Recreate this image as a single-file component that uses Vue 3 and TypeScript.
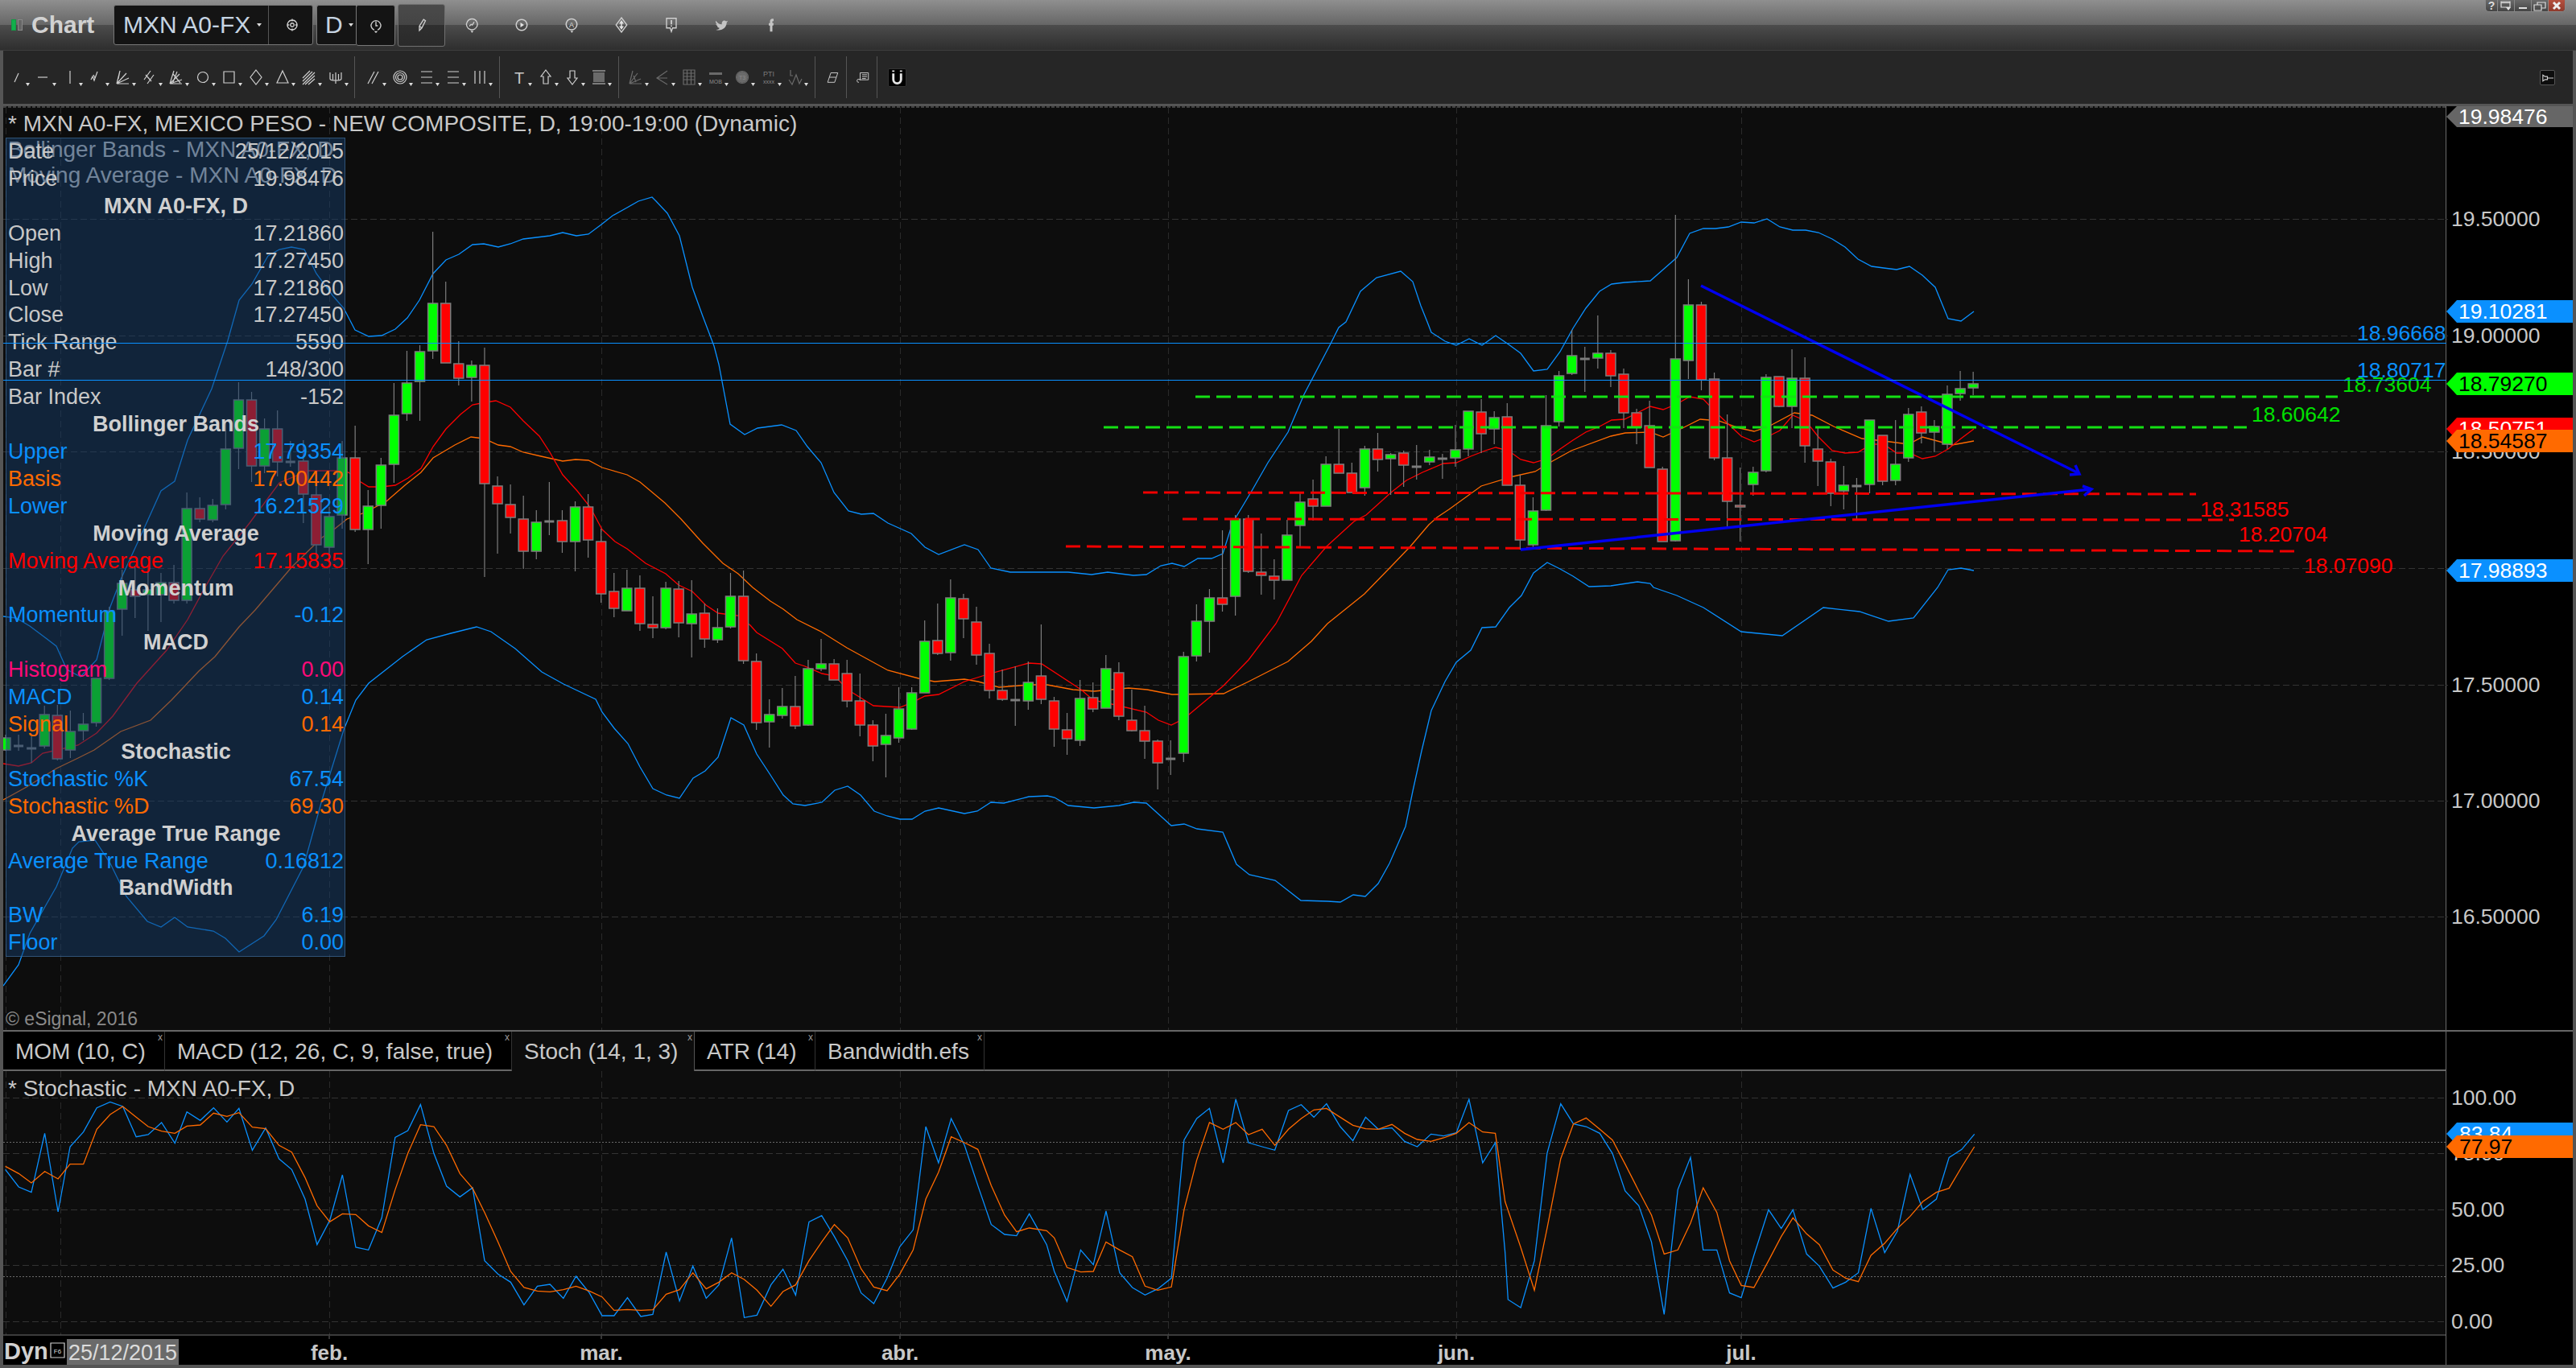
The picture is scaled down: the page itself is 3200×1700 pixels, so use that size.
<script setup lang="ts">
type Candle = [number, number, number, number, number]; // wickTop, wickBot, bodyTop, bodyBot, kind (1 up, 0 down, 2 doji)
const raw: Candle[] = [
[913,933,917,932,1],[913,933,927,927,2],[915,948,930,930,2],[877,930,888,927,1],[876,945,889,943,0],[883,942,909,932,1],[886,920,900,908,1],[843,903,843,898,1],[754,845,759,843,1],[708,790,725,757,1],[704,768,733,741,0],[704,784,733,739,1],[712,773,724,739,1],[702,750,724,746,0],[612,750,632,746,1],[618,649,632,645,0],[620,649,628,646,1],[522,633,558,627,1],[475,583,497,557,1],[487,599,497,579,0],[520,588,533,579,1],[510,592,533,574,0],[548,580,574,574,2],[547,650,573,614,0],[590,693,615,677,0],[630,700,642,680,1],[548,657,569,640,1],
[529,661,569,658,0],[609,701,629,658,1],[569,657,578,628,1],[476,600,516,577,1],[436,523,476,514,1],[429,523,437,474,1],[288,446,377,436,1],[350,451,377,451,0],[424,479,452,470,0],[448,499,454,469,1],[432,717,454,601,0],[592,688,604,626,0],[602,663,627,643,0],[616,707,645,685,0],[634,695,649,685,1],[599,665,648,648,2],[634,687,647,673,0],[623,710,630,673,1],[614,693,630,671,0],[657,749,673,738,0],
[712,767,735,756,0],[708,759,731,759,1],[715,784,731,775,0],[741,793,776,780,0],[723,782,731,780,1],[722,792,732,774,0],[721,817,763,775,1],[750,805,762,794,0],[756,799,780,795,1],[712,781,741,779,1],[709,825,741,821,0],[812,907,822,898,0],[869,929,888,897,1],[855,893,878,889,1],[840,906,878,902,0],
[820,902,831,901,1],[794,834,825,831,1],[819,845,825,845,0],[820,879,837,871,0],[837,915,871,901,0],[895,946,901,927,0],[887,966,914,925,1],[854,923,881,917,1],[854,907,861,906,1],[771,861,797,861,1],[750,814,796,812,0],[720,821,743,811,1],[738,793,744,769,0],[754,826,773,814,0],[800,868,812,858,0],[832,871,858,869,0],[828,902,870,870,2],[822,882,848,871,1],[776,875,840,869,0],[866,928,871,906,0],[886,938,907,918,0],[845,927,868,920,1],[848,885,867,881,0],[814,880,831,880,1],[823,895,836,890,0],[857,909,895,908,0],[877,943,908,921,0],[919,981,921,948,0],[920,963,943,943,2],[810,947,816,936,1],[751,822,772,815,1],[732,811,743,772,1],[659,760,743,751,0],[640,765,645,741,1],[640,712,645,710,0],[663,739,711,715,0],[695,745,716,721,0],[646,721,665,721,1],
[613,680,624,653,1],[596,647,620,629,0],[567,629,577,629,1],[533,588,577,588,0],[575,612,588,612,0],[554,616,558,606,1],[538,586,558,571,0],[563,615,565,570,1],[560,605,563,578,0],[553,596,580,580,2],[559,578,568,574,1],[564,595,570,570,2],
[528,580,559,569,1],[511,567,511,558,1],[496,563,512,539,0],[511,552,519,533,1],[501,603,518,603,0],[590,683,603,671,0],[618,682,635,677,1],[491,635,529,634,1],[461,530,467,524,1],[410,466,442,464,1],[431,487,446,446,2],[392,458,439,445,1],[435,481,439,467,0],[458,532,465,513,0],[508,552,513,531,0],[498,581,529,581,0],[580,673,583,673,0],[267,673,446,672,1],[347,471,379,448,1],[375,485,379,472,0],[463,572,471,569,0],[515,656,569,623,0],[581,673,628,630,0],[580,616,587,602,1],[465,587,469,585,1],[468,506,468,505,0],[434,532,470,505,1],[444,575,470,554,0],[530,604,558,573,0],[570,629,574,613,0],[579,633,603,610,1],[594,647,604,604,2],[522,613,522,602,1],[541,603,541,598,0],[522,603,577,597,1],[507,574,515,569,1],[505,551,512,538,0],[522,562,530,537,1],[479,558,490,552,1],[461,498,483,489,1],[462,491,477,482,1],
];
const candles = raw.map((c, i) => ({ x: 7 + 16.08 * i, wt: c[0], wb: c[1], bt: c[2], bb: c[3], k: c[4] }));

const pts = (a: number[]) => {
  const out: string[] = [];
  for (let i = 0; i < a.length; i += 2) out.push(a[i] + ',' + a[i + 1]);
  return out.join(' ');
};
const upper = pts([4,766,20,768,37,778,57,793,70,803,83,832,100,841,120,820,137,754,150,720,182,650,200,610,217,598,233,547,263,483,283,423,297,373,313,353,333,318,347,310,362,307,378,310,393,340,413,367,427,383,441,410,458,418,474,417,491,409,506,395,521,373,538,340,554,323,570,316,587,304,601,303,619,307,634,303,650,297,683,293,699,289,716,293,731,291,747,279,761,268,779,258,793,250,810,245,815,250,829,265,844,293,860,357,873,393,887,430,893,453,907,527,925,540,941,532,971,528,989,535,1003,555,1020,575,1036,612,1054,635,1070,639,1085,638,1103,650,1132,663,1149,680,1166,689,1198,677,1215,683,1231,706,1255,711,1327,711,1356,714,1376,711,1408,715,1424,714,1442,703,1456,700,1471,704,1488,694,1505,694,1519,688,1531,650,1555,610,1575,575,1600,537,1620,490,1653,427,1663,407,1672,400,1690,362,1710,345,1740,337,1755,350,1765,380,1773,400,1778,413,1795,424,1809,429,1825,421,1841,429,1858,417,1874,428,1889,439,1905,461,1922,459,1938,437,1954,408,1970,383,1987,362,2002,353,2018,351,2050,349,2066,335,2083,320,2099,290,2116,284,2131,284,2147,282,2163,276,2179,277,2195,272,2211,282,2227,286,2243,286,2259,289,2276,297,2292,307,2308,322,2325,331,2340,333,2356,335,2372,331,2388,342,2404,357,2420,396,2436,399,2452,387]);
const lower = pts([4,1225,23,1199,37,1160,70,1102,90,1054,98,1046,118,1044,137,1073,157,1114,183,1145,200,1152,217,1140,233,1152,265,1157,280,1166,297,1183,328,1163,343,1143,377,1077,400,994,427,907,442,870,458,849,500,816,530,795,560,787,592,779,610,785,640,806,673,835,700,850,740,869,748,885,763,905,780,924,795,953,811,980,828,988,844,992,861,967,876,958,892,941,908,892,924,901,940,937,957,963,973,988,985,999,1000,1001,1021,997,1037,982,1053,977,1069,988,1086,1008,1102,1014,1118,1018,1133,1018,1149,1008,1166,1004,1198,1011,1214,1008,1231,997,1247,998,1278,990,1301,989,1310,991,1327,1001,1359,1004,1390,1001,1408,997,1424,998,1455,1026,1471,1024,1487,1030,1519,1034,1536,1074,1552,1087,1584,1094,1616,1119,1649,1120,1665,1121,1681,1112,1696,1114,1712,1098,1726,1073,1746,1027,1755,983,1766,933,1778,883,1795,847,1809,823,1827,808,1841,780,1858,779,1875,755,1890,740,1905,712,1922,699,1938,707,1954,716,1974,729,2001,728,2034,723,2050,725,2054,730,2083,740,2116,755,2163,785,2214,790,2265,755,2310,760,2346,772,2377,768,2407,730,2420,708,2436,706,2452,709]);
const ma = pts([4,949,23,952,39,948,53,936,71,932,97,926,120,911,140,890,170,849,207,808,233,770,253,733,277,691,310,650,347,600,383,585,420,585,433,587,445,597,458,605,474,605,491,603,507,594,523,582,538,555,554,533,572,515,587,503,603,500,616,498,634,506,650,523,670,542,683,562,699,590,717,610,733,630,748,658,764,673,779,682,802,700,827,713,843,727,860,735,877,752,892,762,917,765,932,777,940,786,972,806,988,824,1000,828,1021,837,1037,840,1053,857,1069,867,1085,877,1118,879,1133,873,1149,865,1166,863,1198,847,1230,837,1278,824,1294,825,1343,857,1358,870,1390,877,1424,885,1439,895,1455,901,1471,893,1520,852,1551,820,1585,775,1617,715,1648,679,1682,648,1697,640,1728,612,1747,597,1767,587,1793,576,1809,575,1827,567,1845,560,1858,556,1874,560,1889,571,1905,575,1922,570,1938,558,1954,547,1970,537,1987,530,2002,522,2018,521,2034,513,2050,505,2066,509,2083,502,2099,493,2116,496,2131,512,2147,527,2163,542,2179,549,2195,543,2211,535,2227,516,2243,523,2259,543,2276,560,2292,563,2308,562,2325,552,2340,552,2356,563,2372,563,2388,570,2404,567,2420,558,2436,545,2452,533]);
const basis = pts([4,994,33,978,70,955,97,942,117,932,150,909,187,895,213,870,247,834,267,816,297,779,317,758,340,731,363,704,400,668,416,657,431,645,453,637,480,623,503,603,523,587,538,569,565,553,585,543,601,545,619,553,634,555,650,562,672,567,699,573,715,571,731,572,748,581,779,590,795,599,826,625,846,645,873,675,898,700,917,713,935,730,957,747,973,757,990,770,1020,785,1052,805,1103,833,1141,843,1161,847,1198,844,1215,847,1241,854,1278,851,1301,851,1333,857,1359,859,1402,855,1425,857,1456,863,1520,862,1551,847,1600,822,1629,797,1649,775,1695,738,1729,703,1752,679,1775,652,1785,643,1800,633,1840,604,1880,592,1907,586,1925,575,1952,560,2001,542,2019,538,2050,537,2066,543,2090,532,2112,521,2135,523,2161,532,2179,536,2197,530,2229,513,2251,516,2278,530,2313,545,2340,548,2371,552,2388,543,2425,553,2452,548]);

const z7 = (a: number[]) => a.map((v, i) => (i % 2 ? 1260 + v / 3 : v / 1.206));
const z8 = (a: number[]) => a.map((v, i) => (i % 2 ? 1260 + v / 3 : 1300 + v / 0.825));
const stochK = pts([...z7([8,580,28,645,47,665,67,445,87,738,105,495,125,440,145,350,165,328,184,345,204,458,222,450,242,405,262,482,280,365,300,397,320,350,340,403,358,352,378,508,398,425,418,540,437,580,457,690,475,860,494,770,513,600,533,870,552,880,572,760,592,460,611,435,630,338,650,520,669,642,689,682,708,648,726,920,746,970,765,1000,785,1085,805,1015,824,1008,844,1060,863,978,883,1040,902,1125,920,1125,940,1058,960,1128,978,1120,998,888,1018,1070,1038,940,1058,1060,1077,1010,1096,835,1115,1132,1134,1123,1155,1010,1173,952,1192,1048,1212,775,1231,752,1250,830,1270,920,1290,1040,1309,1080,1329,985,1348,868,1368,805,1387,420,1406,555,1425,390,1445,490,1465,640,1485,785,1505,822,1523,827,1542,745,1568,860]),
...z8([8,960,21,1072,35,880,48,935,61,735,75,965,88,1020,101,1048,114,1025,128,985,141,470,154,390,167,352,181,555,194,318,207,480,221,495,234,508,248,360,261,338,274,385,287,335,301,420,314,473,327,385,340,430,354,425,367,475,380,495,394,448,407,455,420,443,433,318,447,555,460,480,470,890,473,1065,486,1095,500,920,513,520,527,335,540,410,553,420,567,445,580,520,593,660,607,715,620,850,633,1120,647,655,660,535,673,880,687,880,700,1040,712,1058,725,900,740,730,753,800,765,730,779,895,792,940,806,1022,819,1000,832,965,845,725,859,890,872,810,885,598,898,730,912,690,925,535,938,505,951,448])]);
const stochD = pts([...z7([8,568,28,595,47,630,67,587,87,615,105,560,125,560,145,430,165,375,184,345,204,385,222,420,242,437,262,445,280,418,300,414,320,370,340,382,358,368,378,422,398,428,418,490,437,515,457,610,475,715,494,775,513,745,533,748,552,790,572,815,592,655,611,520,630,413,650,420,669,490,689,595,708,650,726,740,746,850,765,960,785,1020,805,1033,824,1036,844,1028,863,1015,883,1033,902,1055,920,1105,940,1102,960,1105,978,1103,998,1045,1018,1028,1038,965,1058,1025,1077,1000,1096,965,1115,990,1134,1030,1155,1090,1173,1035,1192,1010,1212,920,1231,850,1250,785,1270,835,1290,950,1309,1018,1329,1032,1348,970,1368,880,1387,690,1406,590,1425,458,1445,480,1465,505,1485,640,1505,750,1523,812,1542,798,1568,808]),
...z8([8,835,21,945,35,962,48,960,61,850,75,880,88,905,101,1015,114,1030,128,1018,141,730,154,545,167,405,181,430,194,405,207,450,221,430,234,490,248,430,261,390,274,358,287,352,301,385,314,415,327,428,340,430,354,412,367,445,380,468,394,475,407,462,420,445,433,405,447,440,460,445,470,700,486,870,500,1030,513,800,527,540,540,410,553,388,567,430,580,470,593,560,607,660,620,750,633,895,647,880,660,780,673,648,687,740,700,920,712,1012,725,1020,740,920,753,830,765,760,779,820,792,860,806,955,819,985,832,998,845,900,859,855,872,800,885,755,898,700,912,665,925,650,938,570,951,495])]);

const vGrid = [7, 75, 409, 747, 1118, 1451, 1809, 2163];
const hGrid = [272, 417, 561, 706, 851, 995, 1139];
const axis = [
  { y: 272, t: '19.50000' }, { y: 417, t: '19.00000' }, { y: 561, t: '18.50000' },
  { y: 706, t: '18.00000' }, { y: 851, t: '17.50000' }, { y: 995, t: '17.00000' }, { y: 1139, t: '16.50000' },
];
const tagPath = (y: number, h: number) => `M3039 ${y + h / 2}L3052 ${y}H3196V${y + h}H3052Z`;
const tags = [
  { y: 132, h: 26, t: '19.98476', fill: '#666666', ink: '#ffffff' },
  { y: 373, h: 28, t: '19.10281', fill: '#0a90ff', ink: '#ffffff' },
  { y: 463, h: 28, t: '18.79270', fill: '#00ff00', ink: '#000000' },
  { y: 519, h: 28, t: '18.50751', fill: '#ff0000', ink: '#ffffff' },
  { y: 534, h: 28, t: '18.54587', fill: '#ff6a00', ink: '#000000' },
  { y: 695, h: 28, t: '17.98893', fill: '#0a90ff', ink: '#ffffff' },
];
const levels = [
  { x: 2928, y: 414, t: '18.96668', c: 'c-blue' }, { x: 2928, y: 460, t: '18.80717', c: 'c-blue' },
  { x: 2910, y: 478, t: '18.73604', c: 'c-green' }, { x: 2797, y: 515, t: '18.60642', c: 'c-green' },
  { x: 2733, y: 633, t: '18.31585', c: 'c-red' }, { x: 2781, y: 664, t: '18.20704', c: 'c-red' },
  { x: 2862, y: 703, t: '18.07090', c: 'c-red' },
];
const dashes = [
  { d: 'M1485 493H2904', c: 'dash-green' }, { d: 'M1371 531H2791', c: 'dash-green' },
  { d: 'M1420 612L2728 614', c: 'dash-red' }, { d: 'M1469 645L2775 646', c: 'dash-red' },
  { d: 'M1324 679L2853 685', c: 'dash-red' },
];

const rows = [
  { l: 'Date', v: '25/12/2015' }, { l: 'Price', v: '19.98476' }, { h: 'MXN A0-FX, D' },
  { l: 'Open', v: '17.21860' }, { l: 'High', v: '17.27450' }, { l: 'Low', v: '17.21860' }, { l: 'Close', v: '17.27450' },
  { l: 'Tick Range', v: '5590' }, { l: 'Bar #', v: '148/300' }, { l: 'Bar Index', v: '-152' }, { h: 'Bollinger Bands' },
  { l: 'Upper', v: '17.79354', c: 'c-blue' }, { l: 'Basis', v: '17.00442', c: 'c-orange' }, { l: 'Lower', v: '16.21529', c: 'c-blue' },
  { h: 'Moving Average' }, { l: 'Moving Average', v: '17.15835', c: 'c-red' }, { h: 'Momentum' },
  { l: 'Momentum', v: '-0.12', c: 'c-blue' }, { h: 'MACD' }, { l: 'Histogram', v: '0.00', c: 'c-pink' },
  { l: 'MACD', v: '0.14', c: 'c-blue' }, { l: 'Signal', v: '0.14', c: 'c-orange' }, { h: 'Stochastic' },
  { l: 'Stochastic %K', v: '67.54', c: 'c-blue' }, { l: 'Stochastic %D', v: '69.30', c: 'c-orange' },
  { h: 'Average True Range' }, { l: 'Average True Range', v: '0.16812', c: 'c-blue' }, { h: 'BandWidth' },
  { l: 'BW', v: '6.19', c: 'c-blue' }, { l: 'Floor', v: '0.00', c: 'c-blue' },
];

const tabs = [
  { t: 'MOM (10, C)', w: 201 }, { t: 'MACD (12, 26, C, 9, false, true)', w: 431 },
  { t: 'Stoch (14, 1, 3)', w: 227, on: true }, { t: 'ATR (14)', w: 150 }, { t: 'Bandwidth.efs', w: 210 },
];

const stochGrid = [
  { y: 1364, c: 'grid-h' }, { y: 1503, c: 'grid-h' }, { y: 1572, c: 'grid-h' }, { y: 1642, c: 'grid-h' },
  { y: 1433, c: 'grid-h' }, { y: 1419, c: 'grid-dot' }, { y: 1586, c: 'grid-dot' },
];
const stochAxis = [
  { y: 1364, t: '100.00' }, { y: 1433, t: '75.00' }, { y: 1503, t: '50.00' }, { y: 1572, t: '25.00' }, { y: 1642, t: '0.00' },
];
const months = [
  { x: 409, t: 'feb.' }, { x: 747, t: 'mar.' }, { x: 1118, t: 'abr.' },
  { x: 1451, t: 'may.' }, { x: 1809, t: 'jun.' }, { x: 2163, t: 'jul.' },
];

interface Tool { d?: string; fill?: string; label?: string; sub?: string; dim?: boolean; noArrow?: boolean }
const circle = (r: number) => `M${12 - r} 12a${r} ${r} 0 1 0 ${2 * r} 0a${r} ${r} 0 1 0 ${-2 * r} 0`;
const toolGroups: { cls: string; items: Tool[] }[] = [
  { cls: 'g1', items: [
    { d: 'M9 18L14 7' }, { d: 'M5 12H17' }, { d: 'M12 4V20' },
    { d: 'M5 15L7 11L9 16L13 5M8 9L10 13' },
    { d: 'M4 20L8 4M4 20L16 7M4 20L19 13M4 20H19M8 4L6 14' },
    { d: 'M5 15L13 4M9 20L17 9M7 9L14 17' },
    { d: 'M4 20L9 4M4 20L16 8M4 20L19 15M4 20H19M8 8L17 19M13 5L8 18' },
    { d: circle(6.5) }, { d: 'M5 5H18V19H5Z' }, { d: 'M12 3L19 12L12 21L5 12Z' }, { d: 'M12 4L19 19H5Z' },
    { d: 'M4 13L13 4M4 17L16 5M4 21L19 6M7 21L19 10M11 21L19 14' },
    { d: 'M5 6V14M12 6V20M19 6V14M5 14Q5 16 12 16Q19 16 19 14M8.5 8V15M15.5 8V15' },
  ] },
  { cls: 'g2', items: [
    { d: 'M5 20L13 5M10 20L18 5' },
    { d: circle(8) + circle(5.5) + circle(3) },
    { d: 'M5 5H19M5 12H19M5 19H19' }, { d: 'M5 5H19M5 12H19M5 19H19' }, { d: 'M6 4V20M12 4V20M18 4V20' },
  ] },
  { cls: 'g3', items: [
    { label: 'T' },
    { d: 'M12 3L18 11H15V20H9V11H6Z' }, { d: 'M12 21L18 13H15V4H9V13H6Z' },
    { d: 'M4 4H20M4 20H20', fill: 'M5 6H19V18H5Z' },
  ] },
  { cls: 'g4', items: [
    { d: 'M4 20L8 4M4 20L14 7M4 20L18 14M4 20H19M9 10L12 18', dim: true },
    { d: 'M18 4L5 13L18 21M5 13L18 13', dim: true },
    { d: 'M5 3H19V21H5ZM5 7H19M5 11H19M5 15H19M9.5 3V21M14.5 3V21', dim: true },
    { fill: 'M4 6H20V9H4Z', sub: 'MOB', dim: true },
    { d: circle(7.5), fill: circle(7), sub: '', label: 'T3', dim: true },
    { label: 'PTI', sub: 'xxxx', dim: true },
    { d: 'M4 15L8 21L13 9L17 20L20 14M6 3V10H9', dim: true },
  ] },
  { cls: 'g5', items: [{ d: 'M9 5H20L15 20H4ZM6.5 12H17.5', noArrow: true }] },
  { cls: 'g6', items: [{ d: 'M7 5H20V16H7ZM10 8H18M10 11H18M10 14H16M7 17A2.5 2.5 0 1 0 5 20', noArrow: true }] },
];
</script>

<template>
  <div class="window">
    <header class="titlebar">
      <span class="led led-on"></span><span class="led"></span>
      <span class="app">Chart</span>
      <div class="symbol">
        <span class="sym-text">MXN A0-FX</span><i class="tri"></i>
        <span class="sym-cfg">
          <svg width="18" height="18" viewBox="0 0 24 24"><path class="ic" d="M12 4a8 8 0 1 0 .01 0M12 9a3 3 0 1 0 .01 0M12 2V6M12 18V22M4 12H7M17 12H20" /></svg>
        </span>
      </div>
      <div class="interval"><span class="sym-text">D</span><i class="tri"></i></div>
      <div class="clockbox">
        <svg width="18" height="20" viewBox="0 0 24 26"><path class="ic" d="M9 20A8 8 0 1 1 15 20M12 6V13H15" /><path class="white" d="M9 22H15L12 25Z" /></svg>
      </div>
      <div class="pencil">
        <svg width="18" height="20" viewBox="0 0 24 26"><path class="ic" d="M8 22L8 15L15 4L18 6L12 18ZM8 15L12 18" /></svg>
      </div>
      <div class="ticons">
        <svg width="18" height="20" viewBox="0 0 24 26"><path class="ic" d="M12 3a9 9 0 1 0 6 16M8 15L11 12L13 13L16 8" /><path class="ic" d="M18 19a9 9 0 0 0 -6 -16" /><path class="white" d="M10 23H15L12.500 26Z" /></svg>
        <svg width="18" height="20" viewBox="0 0 24 26"><path class="ic" d="M12 4a9 9 0 1 0 .01 0" /><path class="white" d="M10 9L16 13L10 17Z" /></svg>
        <svg width="18" height="20" viewBox="0 0 24 26"><path class="ic" d="M12 3a9 9 0 1 0 .01 0" /><text class="glyph" x="12" y="17" text-anchor="middle">A</text><path class="white" d="M10 23H15L12.500 26Z" /></svg>
        <svg width="18" height="20" viewBox="0 0 24 26"><path class="ic" d="M12 1L21 13L12 25L3 13Z" /><path class="white" d="M12 5L16 11H13V13H11V11H8ZM12 21L16 15H13V13H11V15H8Z" /></svg>
        <svg width="18" height="20" viewBox="0 0 24 26"><path class="ic" d="M4 2H20V18H14L12 24L10 18H4Z" /><path class="white" d="M11 5H13V12H11ZM11 13.500H13V15.500H11Z" /></svg>
        <svg width="18" height="20" viewBox="0 0 24 26"><path class="soft" d="M3 6C6 10 9 12 13 12C12 7 17 4 20 7L23 6L21 9C21 17 13 24 3 21C7 21 9 19 9 18C5 17 5 15 6 15C4 14 3 12 3 11C4 12 5 12 5 12C3 10 2 8 3 6Z" /></svg>
        <svg width="18" height="20" viewBox="0 0 24 26"><path class="soft" d="M10 24V14H8V10H10V7C10 4 12 2 16 3V7C14 6.500 14 7 14 8V10H16L15.500 14H14V24Z" /></svg>
      </div>
      <div class="winbtns">
        <span class="wb"><span class="q">?</span></span>
        <span class="wb"><svg width="20" height="15" viewBox="0 0 20 15"><path class="wi" d="M4 2H15V9H4ZM4 3.500H15" /><path class="white" d="M10 9H16L13 13Z" /></svg></span>
        <span class="wb"><svg width="20" height="15" viewBox="0 0 20 15"><path class="wi2" d="M5 10H15" /></svg></span>
        <span class="wb"><svg width="20" height="15" viewBox="0 0 20 15"><path class="wi" d="M3 6H12V13H3ZM7 6V3H17V10H12" /></svg></span>
        <span class="wb wb-x"><svg width="20" height="15" viewBox="0 0 20 15"><path class="wi3" d="M6 3L14 11M14 3L6 11" /></svg></span>
      </div>
    </header>

    <div class="framed">
      <nav class="toolbar">
        <div v-for="(g, gi) in toolGroups" :key="gi" class="tgroup" :class="g.cls">
          <svg v-for="(it, ii) in g.items" :key="ii" class="tool" :class="{ dim: it.dim }" width="33" height="28" viewBox="0 0 33 28">
            <g transform="translate(0 2)">
              <path v-if="it.fill" class="tfill" :d="it.fill" />
              <path v-if="it.d" class="tline" :d="it.d" />
              <text v-if="it.label === 'T'" class="tg-big" x="12" y="20" text-anchor="middle">T</text>
              <text v-else-if="it.label === 'T3'" class="tg-s" x="12" y="15" text-anchor="middle">T3</text>
              <text v-else-if="it.label" class="tg-m" x="12" y="11" text-anchor="middle">{{ it.label }}</text>
              <text v-if="it.sub" class="tg-s" x="12" y="20" text-anchor="middle">{{ it.sub }}</text>
            </g>
            <path v-if="!it.noArrow" class="tarrow" d="M23 21H28L25.500 25Z" />
          </svg>
        </div>
        <div class="magnet">
          <svg width="22" height="22" viewBox="0 0 22 22"><path class="mag" d="M6 6V14A5 5 0 0 0 16 14V6" /><path class="white" d="M4.500 2H7.500V4H4.500ZM14.500 2H17.500V4H14.500Z" /></svg>
        </div>
        <div class="pin">
          <svg width="18" height="18" viewBox="0 0 18 18"><path class="ic thin" d="M3 5L6 7H9V11H6L3 13ZM9 9H17" /></svg>
        </div>
      </nav>

      <section class="mainpane">
        <svg class="plot" width="3192" height="1148" viewBox="4 132 3192 1148">
          <rect x="4" y="132" width="3035" height="1148" class="plotbg" />
          <path class="topdash" d="M4 133H3039" />
          <path v-for="x in vGrid" :key="'v' + x" class="grid-v" :d="`M${x} 133V1280`" />
          <path v-for="y in hGrid" :key="'h' + y" class="grid-h" :d="`M4 ${y}H3041`" />
          <polyline class="ln-blue" :points="upper" />
          <polyline class="ln-blue" :points="lower" />
          <polyline class="ln-orange" :points="basis" />
          <polyline class="ln-red" :points="ma" />
          <g v-for="(c, i) in candles" :key="i">
            <path class="wick" :d="`M${c.x} ${c.wt}V${c.wb}`" />
            <rect v-if="c.k === 2" class="doji" :x="c.x - 6" :y="c.bt - 1.5" width="12" height="3" />
            <rect v-else :class="c.k === 1 ? 'up' : 'down'" :x="c.x - 6" :y="c.bt" width="12" :height="Math.max(c.bb - c.bt, 2)" />
          </g>
          <path v-for="(d, i) in dashes" :key="'d' + i" :class="d.c" :d="d.d" />
          <path class="trend" d="M2113 355L2582 588M2571 590L2583 589L2578 578" />
          <path class="trend" d="M1889 683L2597 608M2587 604L2598 608L2589 616" />
          <text class="legend" x="10" y="163">* MXN A0-FX, MEXICO PESO - NEW COMPOSITE, D, 19:00-19:00 (Dynamic)</text>
          <text class="legend" x="10" y="195">Bollinger Bands - MXN A0-FX, D</text>
          <text class="legend" x="10" y="227">Moving Average - MXN A0-FX, D</text>
          <text class="copy" x="7" y="1274">© eSignal, 2016</text>
          <text v-for="l in levels" :key="l.t" :class="['level', l.c]" :x="l.x" :y="l.y + 9">{{ l.t }}</text>
          <rect x="3039" y="132" width="157" height="1148" class="axisbg" />
          <path class="axisline" d="M3038.5 132V1280" />
          <path v-for="y in hGrid" :key="'t' + y" class="grid-h" :d="`M3038 ${y}H3041`" />
          <text v-for="a in axis" :key="a.t" class="axislabel" x="3045" :y="a.y + 9">{{ a.t }}</text>
          <g v-for="t in tags" :key="t.t">
            <path :d="tagPath(t.y, t.h)" :fill="t.fill" />
            <text class="taglabel" x="3054" :y="t.y + t.h / 2 + 9" :fill="t.ink">{{ t.t }}</text>
          </g>
        </svg>
        <div class="datapanel">
          <div v-for="(r, i) in rows" :key="i" class="row" :class="[r.c, { head: r.h }]">
            <template v-if="r.h">{{ r.h }}</template>
            <template v-else><span>{{ r.l }}</span><span>{{ r.v }}</span></template>
          </div>
        </div>
        <svg class="cursorlines" width="3035" height="1148" viewBox="4 132 3035 1148">
          <path class="hline" d="M4 426.500H3039M4 472.500H3039" />
        </svg>
      </section>

      <div class="tabs">
        <div v-for="t in tabs" :key="t.t" class="tab" :class="{ on: t.on }" :style="{ width: t.w + 'px' }">
          {{ t.t }}<span class="close">x</span>
        </div>
        <div class="tabfill"></div>
        <div class="tabaxis"></div>
      </div>

      <svg class="stoch" width="3192" height="329" viewBox="4 1331 3192 329">
        <rect x="4" y="1331" width="3035" height="329" class="plotbg" />
        <path v-for="x in vGrid" :key="'sv' + x" class="grid-v" :d="`M${x} 1331V1659`" />
        <path v-for="g in stochGrid" :key="'sg' + g.y" :class="g.c" :d="`M4 ${g.y}H3039`" />
        <polyline class="ln-blue" :points="stochK" />
        <polyline class="ln-orange" :points="stochD" />
        <text class="legend" x="10" y="1362">* Stochastic - MXN A0-FX, D</text>
        <rect x="3039" y="1331" width="157" height="329" class="axisbg" />
        <path class="axisline" d="M3038.5 1331V1660" />
        <path class="baseline" d="M4 1659H3039" />
        <text v-for="a in stochAxis" :key="a.t" class="axislabel" x="3045" :y="a.y + 9">{{ a.t }}</text>
        <path :d="tagPath(1395, 28)" fill="#0a90ff" />
        <text class="taglabel" x="3055" y="1418" fill="#ffffff">83.84</text>
        <path :d="tagPath(1411, 28)" fill="#ff6a00" />
        <text class="taglabel" x="3055" y="1434" fill="#000000">77.97</text>
      </svg>

      <svg class="timeaxis" width="3192" height="36" viewBox="4 1660 3192 36">
        <text class="dyn" x="5" y="1689">Dyn</text>
        <path class="ic thin" d="M63 1669H80V1687H63Z" />
        <text class="tinyfc" x="71.500" y="1682" text-anchor="middle">F6</text>
        <rect x="83" y="1664" width="139" height="32" class="datebox" />
        <text class="datelabel" x="152.500" y="1690" text-anchor="middle">25/12/2015</text>
        <path v-for="m in months" :key="'tick' + m.t" class="axisline" :d="`M${m.x} 1660V1664`" />
        <text v-for="m in months" :key="m.t" class="month" :x="m.x" y="1690" text-anchor="middle">{{ m.t }}</text>
        <path class="axisline" d="M3038.5 1660V1696" />
      </svg>
    </div>
  </div>
</template>

<style>
html, body { margin: 0; background: #000; }
</style>

<style scoped>
.window {
  width: 3200px; height: 1700px; display: flex; flex-direction: column; overflow: hidden;
  background: #000; font-family: "Liberation Sans", Arial, sans-serif; color: #c8c8c8;
}
.titlebar {
  position: relative; height: 63px; box-sizing: border-box; flex: none; display: flex; align-items: center; padding-left: 14px;
  background: linear-gradient(#8f8f8f, #666 50%, #4c4c4c 50%, #2e2e2e);
  border-bottom: 1px solid #3e3e3e;
}
.led { width: 6px; height: 14px; background: #666; border: 1px solid #888; box-sizing: border-box; margin-right: 2px; }
.led-on { background: #12b04c; border-color: #129a44; }
.app { font-size: 30px; font-weight: 700; color: #d2d2d2; margin-left: 9px; width: 102px; }
.symbol, .interval, .clockbox { background: #141414; border: 1px solid #777; border-radius: 3px; height: 50px; box-sizing: border-box; display: flex; align-items: center; }
.symbol { width: 248px; padding-left: 11px; }
.sym-text { font-size: 30px; color: #c6d4e2; }
.tri { width: 0; height: 0; border: 3px solid transparent; border-top: 4px solid #ddd; border-bottom: 0; margin-left: 8px; }
.sym-cfg { margin-left: 8px; height: 100%; border-left: 1px solid #555; display: flex; align-items: center; padding-left: 20px; }
.interval { width: 49px; margin-left: 4px; padding-left: 10px; border-right: 0; border-radius: 3px 0 0 3px; }
.interval .tri { margin-left: 7px; }
.clockbox { width: 49px; height: 51px; justify-content: center; margin-top: 1px; }
.pencil {
  width: 59px; height: 53px; margin-left: 3px; box-sizing: border-box; display: flex; align-items: center; justify-content: center;
  border: 1px solid #707070; border-radius: 3px; background: linear-gradient(#4a4a4a, #444 50%, #2f2f2f 50%, #2a2a2a);
}
.ticons { display: flex; gap: 44px; margin-left: 24px; }
.ic { fill: none; stroke: #d0d0d0; stroke-width: 1.8; }
.ic.thin { stroke-width: 1.2; }
.soft { fill: #c4c4c4; }
.white { fill: #e4e4e4; }
.glyph { font-size: 12px; fill: #ddd; }
.winbtns {
  position: absolute; right: 13px; top: 0; width: 100px; height: 15px; display: flex; overflow: hidden;
  border: 1px solid #888; border-top: 0; border-radius: 0 0 5px 5px; box-sizing: border-box;
  background: linear-gradient(#6a6a6a, #444);
}
.wb { flex: 1; display: flex; align-items: center; justify-content: center; border-right: 1px solid #888; }
.wb-x { background: linear-gradient(#b5503e, #8f3a2c); border-right: 0; }
.q { font-size: 14px; font-weight: 700; color: #ddd; line-height: 14px; }
.wi { fill: none; stroke: #ddd; stroke-width: 1.2; }
.wi2 { fill: none; stroke: #ddd; stroke-width: 2; }
.wi3 { fill: none; stroke: #eee; stroke-width: 3; }

.framed { flex: 1; display: flex; flex-direction: column; border: 4px solid #555; border-top: 0; min-height: 0; }
.toolbar {
  flex: none; height: 69px; box-sizing: border-box; display: flex; align-items: center; padding-left: 5px; position: relative;
  background: #262626; border-bottom: 3px solid #555;
}
.tgroup { display: flex; align-items: center; height: 52px; border-right: 1px solid #555; }
.g1 { padding-right: 2px; }
.g2 { padding: 0 3px 0 11px; }
.g3 { padding: 0 3px 0 12px; }
.g4 { padding: 0 3px 0 9px; }
.g5, .g6 { padding: 0 0 0 12px; }
.g5 svg, .g6 svg { width: 26px; }
.g6 { padding-left: 11px; }
.tool { flex: none; }
.tline { fill: none; stroke: #cfcfcf; stroke-width: 1.2; }
.tfill { fill: #6a6a6a; }
.tarrow { fill: #ddd; }
.tg-big { font-size: 20px; fill: #c8c8c8; }
.tg-m { font-size: 9px; fill: #7a7a7a; }
.tg-s { font-size: 7px; fill: #8a8a8a; }
.dim .tline { stroke: #6a6a6a; }
.magnet {
  margin-left: 13px; width: 23px; height: 23px; background: #000; border-radius: 2px; border: 1px solid #333;
  display: flex; align-items: center; justify-content: center; box-sizing: border-box;
}
.mag { fill: none; stroke: #e6e6e6; stroke-width: 3; }
.pin {
  position: absolute; left: 3151px; top: 24px; width: 19px; height: 19px; background: #0d0d0d; border: 1px solid #555; border-radius: 2px;
  display: flex; align-items: center; justify-content: center; box-sizing: border-box;
}

.mainpane { position: relative; flex: none; height: 1150px; border-bottom: 2px solid #666; box-sizing: border-box; }
.plot, .stoch, .timeaxis { display: block; flex: none; }
.plotbg { fill: #0d0d0d; }
.axisbg { fill: #000; }
.topdash { fill: none; stroke: #777; stroke-width: 1; stroke-dasharray: 4 2; }
.grid-v { fill: none; stroke: #2a2a2a; stroke-width: 1; stroke-dasharray: 8 5; shape-rendering: crispEdges; }
.grid-h { fill: none; stroke: #333; stroke-width: 1; stroke-dasharray: 8 4; shape-rendering: crispEdges; }
.grid-dot { fill: none; stroke: #6a6a6a; stroke-width: 1; stroke-dasharray: 2 2; shape-rendering: crispEdges; }
polyline { fill: none; stroke-width: 1.3; }
.ln-blue { stroke: #0a90ff; }
.ln-orange { stroke: #ff6a00; }
.ln-red { stroke: #ff0000; }
.wick { fill: none; stroke: #7d7d7d; stroke-width: 1.2; }
.up { fill: #00ff00; stroke: #7d7d7d; stroke-width: 1.5; }
.down { fill: #ff0000; stroke: #7d7d7d; stroke-width: 1.5; }
.doji { fill: #7d7d7d; }
.dash-green { fill: none; stroke: #14e014; stroke-width: 3; stroke-dasharray: 18 8; }
.dash-red { fill: none; stroke: #f00000; stroke-width: 3; stroke-dasharray: 18 8; }
.trend { fill: none; stroke: #0000f0; stroke-width: 3.5; }
.legend { font-size: 28px; fill: #c8c8c8; }
.copy { font-size: 23px; fill: #8a8a8a; }
.level { font-size: 26.500px; }
.c-blue { fill: #0a90ff; color: #0a90ff; }
.c-green { fill: #00e000; color: #00e000; }
.c-red { fill: #ff0000; color: #ff0000; }
.c-orange { fill: #ff6a00; color: #ff6a00; }
.c-pink { color: #ff0a78; }
.axisline { fill: none; stroke: #6a6a6a; stroke-width: 1; }
.baseline { fill: none; stroke: #6a6a6a; stroke-width: 1; }
.axislabel { font-size: 26.500px; fill: #c8c8c8; }
.taglabel { font-size: 26.500px; }

.datapanel {
  position: absolute; left: 3px; top: 39px; width: 422px; height: 1018px; box-sizing: border-box;
  background: rgba(23, 62, 107, 0.49); border: 1px solid rgba(70, 115, 160, 0.6);
  font-size: 27px; display: flex; flex-direction: column;
}
.row { flex: 1; line-height: 33.900px; display: flex; justify-content: space-between; padding: 0 1px 0 2px; white-space: nowrap; }
.row.head { justify-content: center; font-weight: 700; color: #d0d0d0; }
.cursorlines { position: absolute; left: 0; top: 0; }
.hline { fill: none; stroke: #0a90ff; stroke-width: 1; }

.tabs { flex: none; height: 49px; display: flex; background: #000; }
.tab {
  position: relative; height: 49px; box-sizing: border-box; padding-left: 15px; line-height: 49px; font-size: 28px; color: #c8c8c8;
  border-right: 1px solid #333; border-bottom: 2px solid #666; white-space: nowrap;
}
.tab.on { background: #0d0d0d; border-bottom: 0; border-right: 1px solid #555; }
.close { position: absolute; right: 2px; top: 0; font-size: 12px; line-height: 14px; color: #999; }
.tabfill { flex: 1; border-bottom: 2px solid #666; }
.tabaxis { width: 157px; border-left: 1px solid #6a6a6a; }
.timeaxis { background: #000; }
.dyn { font-size: 29px; font-weight: 700; fill: #d0d0d0; }
.tinyfc { font-size: 8px; fill: #ddd; }
.datebox { fill: #6a6a6a; }
.datelabel { font-size: 27px; fill: #dcdcdc; }
.month { font-size: 26px; font-weight: 700; fill: #c8c8c8; }
</style>
